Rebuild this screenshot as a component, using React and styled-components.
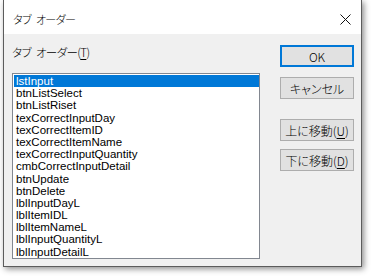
import React from 'react'
import styled, {createGlobalStyle} from 'styled-components'

const items = [
  'lstInput',
  'btnListSelect',
  'btnListRiset',
  'texCorrectInputDay',
  'texCorrectItemID',
  'texCorrectItemName',
  'texCorrectInputQuantity',
  'cmbCorrectInputDetail',
  'btnUpdate',
  'btnDelete',
  'lblInputDayL',
  'lblItemIDL',
  'lblItemNameL',
  'lblInputQuantityL',
  'lblInputDetailL',
]

const App = () => (
  <Page>
    <GlobalStyle />
    <Window>
      <TitleBar>
        <Title>タブ オーダー</Title>
        <CloseButton>
          <svg width="11" height="11" viewBox="0 0 11 11">
            <path d="M0.5 0.5 L10.5 10.5 M10.5 0.5 L0.5 10.5" stroke="#111" strokeWidth="1" fill="none" />
          </svg>
        </CloseButton>
      </TitleBar>
      <Body>
        <LeftCol>
          <Label>
            タブ オーダー(<u>T</u>)
          </Label>
          <ListBox>
            {items.map((name, i) => (
              <Item key={name} $selected={i === 0}>
                {name}
              </Item>
            ))}
          </ListBox>
        </LeftCol>
        <RightCol>
          <Button $default>OK</Button>
          <Button $gap={10}>キャンセル</Button>
          <Button $gap={20}>
            上に移動(<u>U</u>)
          </Button>
          <Button $gap={8}>
            下に移動(<u>D</u>)
          </Button>
        </RightCol>
      </Body>
    </Window>
  </Page>
)

export default App

const GlobalStyle = createGlobalStyle`
  body {
    margin: 0;
    background: #fff;
    font-family: "Noto Sans CJK JP", "Liberation Sans", sans-serif;
  }
`

const Page = styled.div`
  padding-left: 3px;
  width: 371px;
  height: 277px;
  box-sizing: border-box;
`

const Window = styled.div`
  width: 359px;
  height: 267px;
  box-sizing: border-box;
  border: 1px solid #5c5c5c;
  border-top: none;
  background: #f0f0f0;
  display: flex;
  flex-direction: column;
  box-shadow: 2px 2px 6px rgba(0, 0, 0, 0.45);
`

const TitleBar = styled.div`
  height: 34px;
  flex: 0 0 auto;
  background: #fff;
  display: flex;
  align-items: center;
  justify-content: space-between;
  padding-left: 9px;
`

const Title = styled.span`
  font-size: 11px;
  font-weight: 300;
  letter-spacing: -0.6px;
  word-spacing: 3px;
  white-space: pre;
  color: #000;
  font-feature-settings: "palt";
  margin-top: 4px;
`

const CloseButton = styled.div`
  width: 32px;
  height: 34px;
  display: flex;
  align-items: center;
  justify-content: center;
  margin-top: 5px;
`

const Body = styled.div`
  flex: 1;
  display: flex;
  padding: 10px 7px 0 8px;
`

const LeftCol = styled.div`
  width: 248px;
  display: flex;
  flex-direction: column;
`

const Label = styled.div`
  height: 16px;
  line-height: 16px;
  font-size: 11.5px;
  font-weight: 300;
  letter-spacing: -0.6px;
  word-spacing: 3px;
  white-space: pre;
  color: #000;
  font-feature-settings: "palt";
  margin-bottom: 13px;

  u {
    text-underline-offset: 2px;
  }
`

const ListBox = styled.div`
  height: 186px;
  box-sizing: border-box;
  border: 1px solid #828790;
  background: #fff;
  padding: 1px 0 1px 1px;
  overflow: hidden;
`

const Item = styled.div`
  height: 12.2px;
  line-height: 12.2px;
  padding-left: 2px;
  font-family: "Liberation Sans", Arial, sans-serif;
  font-size: 11.5px;
  white-space: nowrap;
  color: ${p => (p.$selected ? '#fff' : '#000')};
  background: ${p => (p.$selected ? '#0078d7' : 'transparent')};
`

const RightCol = styled.div`
  margin-left: auto;
  width: 74px;
  display: flex;
  flex-direction: column;
  padding-top: 1px;
`

const Button = styled.div`
  height: 22px;
  box-sizing: border-box;
  margin-top: ${p => p.$gap || 0}px;
  border: ${p => (p.$default ? '2px solid #0078d7' : '1px solid #adadad')};
  background: #e1e1e1;
  display: flex;
  align-items: center;
  justify-content: center;
  font-size: 12px;
  font-weight: 300;
  color: #000;
  font-feature-settings: "palt";

  u {
    text-underline-offset: 2px;
  }
`
